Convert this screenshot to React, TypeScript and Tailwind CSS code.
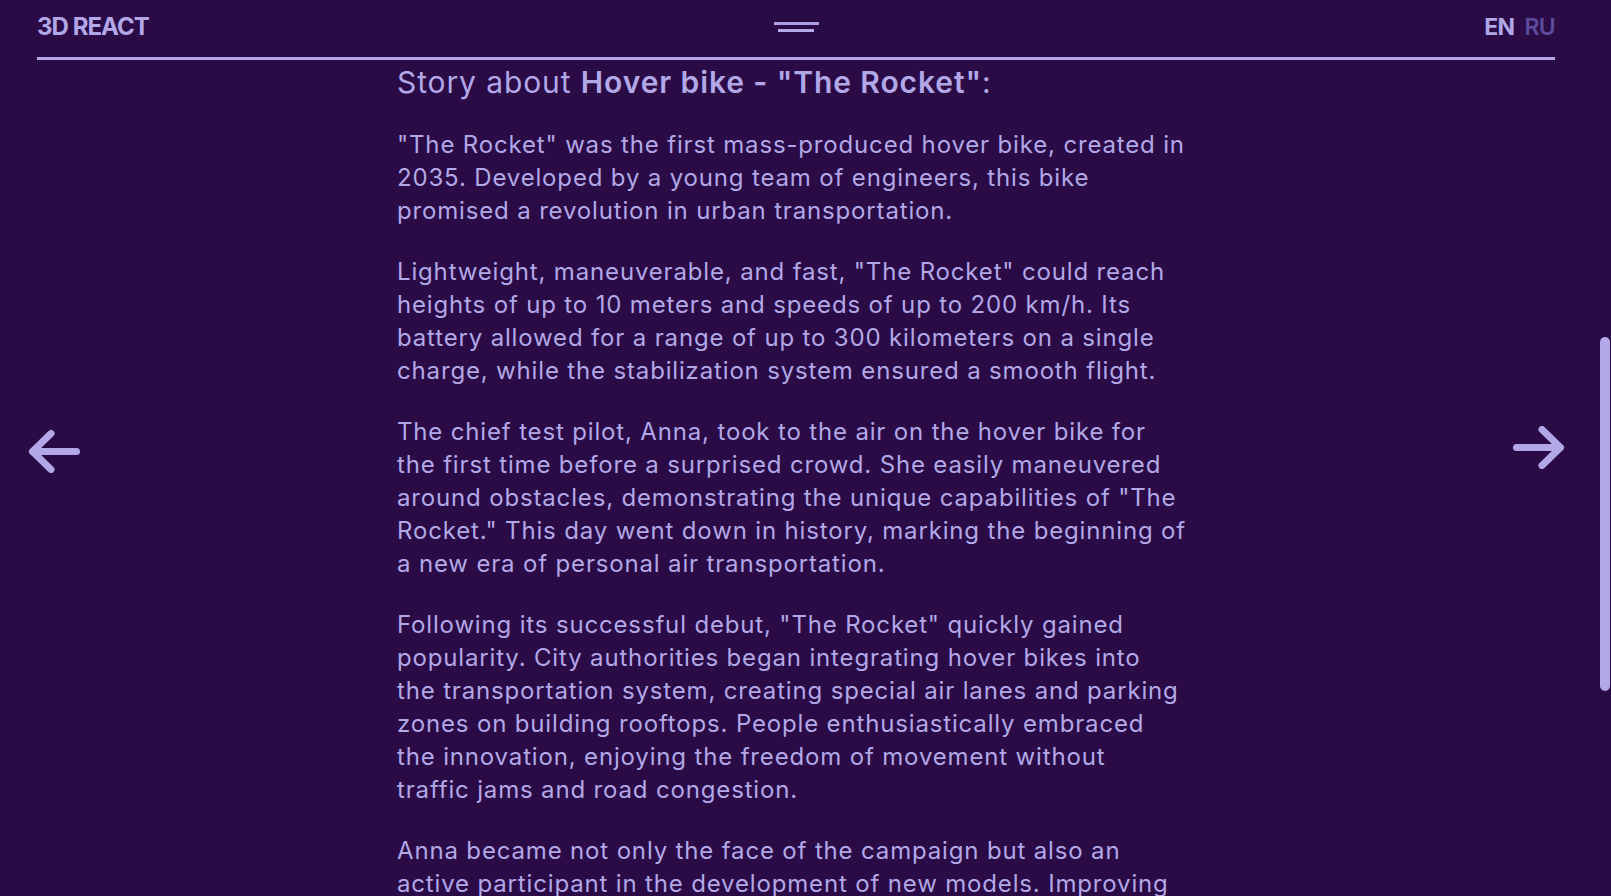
import React from "react";

const story: string[][] = [
  [
    "\"The Rocket\" was the first mass-produced hover bike, created in",
    "2035. Developed by a young team of engineers, this bike",
    "promised a revolution in urban transportation.",
  ],
  [
    "Lightweight, maneuverable, and fast, \"The Rocket\" could reach",
    "heights of up to 10 meters and speeds of up to 200 km/h. Its",
    "battery allowed for a range of up to 300 kilometers on a single",
    "charge, while the stabilization system ensured a smooth flight.",
  ],
  [
    "The chief test pilot, Anna, took to the air on the hover bike for",
    "the first time before a surprised crowd. She easily maneuvered",
    "around obstacles, demonstrating the unique capabilities of \"The",
    "Rocket.\" This day went down in history, marking the beginning of",
    "a new era of personal air transportation.",
  ],
  [
    "Following its successful debut, \"The Rocket\" quickly gained",
    "popularity. City authorities began integrating hover bikes into",
    "the transportation system, creating special air lanes and parking",
    "zones on building rooftops. People enthusiastically embraced",
    "the innovation, enjoying the freedom of movement without",
    "traffic jams and road congestion.",
  ],
  [
    "Anna became not only the face of the campaign but also an",
    "active participant in the development of new models. Improving",
    "every detail, she helped turn the hover bike into a symbol of",
    "a new, free and fast city.",
  ],
];

function Arrow({ dir }: { dir: "left" | "right" }) {
  return (
    <svg width="53" height="43" viewBox="0 0 53 43" fill="none" className={dir === "right" ? "rotate-180" : ""}>
      <path
        d="M4.5 21.5H48.5M23 3.5L4.5 21.5L23 39.5"
        stroke="#b2a8e8"
        strokeWidth="7"
        strokeLinecap="round"
        strokeLinejoin="round"
      />
    </svg>
  );
}

export default function App() {
  return (
    <div className="relative h-[896px] w-full overflow-hidden bg-[#2a0b46] text-[#b2a8e8] font-['Inter',sans-serif]">
      {/* header */}
      <header className="ml-[37px] w-[1518px]">
        <div className="h-[54px] grid grid-cols-3 items-center">
          <span className="justify-self-start text-[24px] font-bold tracking-[-0.04em] leading-none">3D REACT</span>
          <button className="justify-self-center flex flex-col items-center gap-[4px]">
            <span className="block w-[45px] h-[3px] bg-[#a99fe2]" />
            <span className="block w-[36px] h-[3px] bg-[#b2a8e8]" />
          </button>
          <div className="justify-self-end flex items-center gap-[10px] text-[23px] font-bold tracking-[-0.03em] leading-none">
            <span>EN</span>
            <span className="text-[#5d4c9c] font-semibold">RU</span>
          </div>
        </div>
        <div className="mt-[3px] h-[3px] bg-[#b2a8e8]" />
      </header>

      {/* story */}
      <main className="ml-[397px] w-[860px] pt-[4px]">
        <h1 className="text-[30px] leading-[36px] tracking-[0.03em] whitespace-nowrap">
          Story about <span className="font-semibold">Hover bike - "The Rocket"</span>:
        </h1>
        <div className="mt-[28px] flex flex-col gap-[28px]">
          {story.map((lines, i) => (
            <p key={i} className="text-[24px] leading-[33px] tracking-[0.035em] whitespace-nowrap">
              {lines.map((line, j) => (
                <React.Fragment key={j}>
                  {line}
                  {j < lines.length - 1 && <br />}
                </React.Fragment>
              ))}
            </p>
          ))}
        </div>
      </main>

      {/* side navigation */}
      <button className="absolute left-[28px] top-[430px]">
        <Arrow dir="left" />
      </button>
      <button className="absolute left-[1512px] top-[426px]">
        <Arrow dir="right" />
      </button>

      {/* scrollbar thumb */}
      <div className="absolute right-[1px] top-[337px] w-[10px] h-[354px] rounded-full bg-[#b2a8e8]" />
    </div>
  );
}
